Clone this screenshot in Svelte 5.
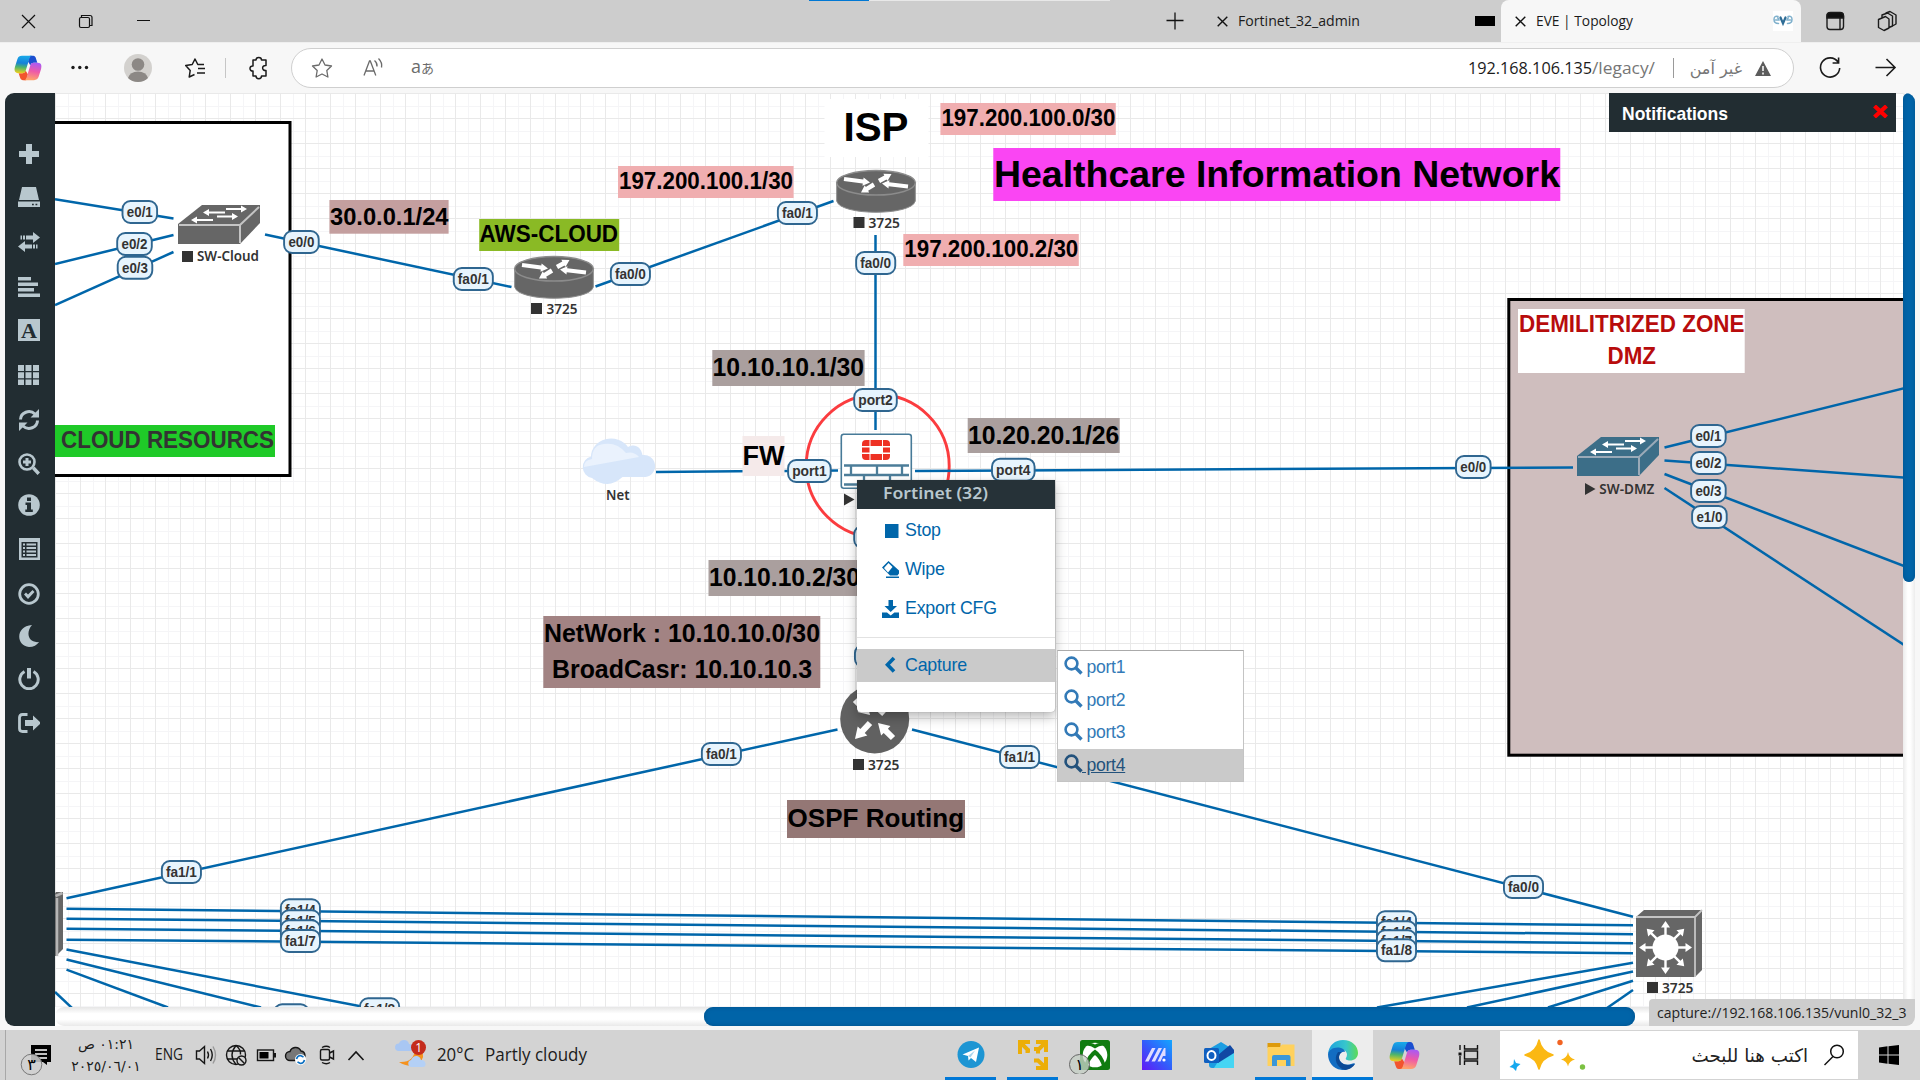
<script>
  const rail = [
    ['plus', 50], ['drive', 21], ['swap', 23], ['align', 23], ['font', 21], ['cells', 23], ['refresh', 22.5],
    ['zoom', 22], ['info', 19], ['list', 22], ['check', 23], ['moon', 20.5], ['power', 20.5], ['logout', 22.5]
  ];

  const links = [
    [55, 199.3, 173.5, 218.5], [55, 264, 173.5, 235], [55, 305, 173.5, 252], [265, 234.5, 511.5, 287],
    [595.5, 286.5, 833.5, 201], [875.5, 235, 875.5, 430], [656, 472, 838, 470.5], [915, 471, 1573, 467.5],
    [1664.5, 447.5, 1904, 388.3], [1664.5, 460.5, 1904, 477.5], [1664.5, 474, 1904, 566], [1664.5, 488, 1904, 645],
    [66.5, 898.3, 837.5, 729.5], [912, 729.5, 1633, 916.7],
    [66.5, 908.7, 1633, 925.3], [66.5, 918.7, 1633, 934.2], [66.5, 928.7, 1633, 943.2], [66.5, 939.7, 1633, 953.2],
    [66.5, 949.5, 380, 1010], [66.5, 959.5, 261, 1007.5], [66.5, 969.7, 168, 1007.5], [55, 992, 72, 1008],
    [1633, 962.7, 1377, 1007.5], [1633, 971.5, 1467, 1007.5], [1633, 980.7, 1548, 1007.5], [1633, 990, 1607, 1008]
  ];

  const ports = [
    ['e0/1', 139.8, 212], ['e0/2', 134.5, 244], ['e0/3', 135, 267.8], ['e0/0', 301.4, 242], ['fa0/1', 473.3, 279],
    ['fa0/0', 630.4, 274], ['fa0/1', 797.4, 213], ['fa0/0', 875.7, 263], ['port2', 875.5, 400], ['port1', 809.4, 471],
    ['port4', 1013.3, 469.7], ['port3', 875.5, 537], ['fa0/0', 874.5, 656], ['e0/0', 1473.3, 467], ['e0/1', 1708.4, 436],
    ['e0/2', 1708.4, 463], ['e0/3', 1708.4, 491], ['e1/0', 1709.4, 517], ['fa0/1', 721.4, 754], ['fa1/1', 1019.6, 757],
    ['fa1/1', 181.4, 872], ['fa0/0', 1523.5, 887], ['fa1/4', 300.4, 910.3], ['fa1/5', 300.4, 921.3], ['fa1/6', 300.4, 931.3],
    ['fa1/7', 300.4, 941], ['fa1/4', 1396.5, 922.3], ['fa1/6', 1396.5, 932.3], ['fa1/7', 1396.5, 941.3], ['fa1/8', 1396.5, 950.3],
    ['fa1/8', 379.6, 1009.3], ['e0/1', 291.4, 1015.3]
  ];
  const portWidth = (p) => (p[0] === 'p' ? 43 : p[0] === 'f' ? 39.5 : 35);
  const portText = (p) => (p[0] === 'p' ? 34.5 : p[0] === 'f' ? 31 : 26);

  // x, y, width, height, fill, font size, text colour, lines of [text, x, baseline, width]
  const labels = [
    [329.4, 200, 119.2, 33.7, '#c49f9f', 24.5, '#000', [['30.0.0.1/24', 330, 224.7, 118.5]]],
    [479.2, 219, 140, 32, '#8aba25', 24.2, '#000', [['AWS-CLOUD', 479.6, 241.5, 138.5]]],
    [618, 166, 175.6, 32, '#f0aeb0', 24, '#000', [['197.200.100.1/30', 619, 189, 174]]],
    [940.4, 103, 175.4, 32, '#f0aeb0', 24, '#000', [['197.200.100.0/30', 941.4, 126, 174]]],
    [903.3, 234, 175.5, 32, '#f0aeb0', 24, '#000', [['197.200.100.2/30', 904.3, 257, 174]]],
    [824.5, 99, 104, 58, '#fff', 41, '#000', [['ISP', 843.5, 141.3, 65]]],
    [993.3, 148, 567, 53, '#fa45f3', 37.5, '#000', [['Healthcare Information Network', 994, 187, 566]]],
    [712.3, 350, 152.3, 36, '#aa9f9e', 25.3, '#000', [['10.10.10.1/30', 712.6, 376, 151.5]]],
    [967.7, 418, 152, 35, '#aa9f9e', 25.3, '#000', [['10.20.20.1/26', 967.9, 443.7, 151.5]]],
    [742.5, 436, 42, 40, '#f5eaea', 28, '#000', [['FW', 742.6, 464.7, 42]]],
    [708.5, 560, 152, 36, '#aa9f9e', 25.3, '#000', [['10.10.10.2/30', 709, 586, 151]]],
    [543.3, 616, 277, 72, '#a28383', 25.8, '#000', [['NetWork : 10.10.10.0/30', 544, 642, 276], ['BroadCasr: 10.10.10.3', 552, 677.7, 260]]],
    [787, 800, 178, 38, '#947775', 26.5, '#000', [['OSPF Routing', 787.6, 827, 176.5]]],
    [40, 425, 235, 32, '#1fca28', 24, '#333', [['CLOUD RESOURCS', 61, 447.7, 213]]],
    [1518, 309, 226.7, 64, '#fff', 24, '#b80c0c', [['DEMILITRIZED ZONE', 1519, 332, 225.5], ['DMZ', 1607.5, 364, 48.5]]]
  ];

  // kind, marker x, marker y, name, text x, baseline, text width
  const names = [
    ['stop', 182, 251, 'SW-Cloud', 197, 261.3, 62], ['stop', 531, 303, '3725', 546.5, 314, 31],
    ['stop', 853.5, 217, '3725', 868.5, 228, 31.5], ['stop', 853, 759, '3725', 868, 770, 31.5],
    ['stop', 1647, 982, '3725', 1662, 993, 31.5], ['play', 1585, 483, 'SW-DMZ', 1599.3, 494, 55],
    ['play', 844, 493.5, 'Fortinet', 858, 506, 50], ['', 0, 0, 'Net', 606, 500, 23.5]
  ];

  const captures = ['port1', 'port2', 'port3', 'port4'];
</script>

{#snippet fit(text, width, size, color, height, baseline)}
  <svg class="fit" {width} {height}><text x="0" y={baseline} textLength={width} lengthAdjust="spacingAndGlyphs" font-size={size} fill={color}>{text}</text></svg>
{/snippet}

{#snippet copilot(size)}
  <svg width={size} height={size} viewBox="0 0 30 30">
    <defs>
      <linearGradient id="cpA" x1="0.3" y1="0" x2="0.2" y2="1"><stop offset="0" stop-color="#19a7e8" /><stop offset=".4" stop-color="#1681d8" /><stop offset=".65" stop-color="#4fb56a" /><stop offset="1" stop-color="#f3d01c" /></linearGradient>
      <linearGradient id="cpB" x1="0.7" y1="0" x2="0.5" y2="1"><stop offset="0" stop-color="#a85af5" /><stop offset=".5" stop-color="#ee5aa8" /><stop offset="1" stop-color="#ffa36b" /></linearGradient>
    </defs>
    <path d="M17 2h3.500c2 0 2.600 1.400 3.200 3.300l1.300 4.200h-3.800c-2 0-3 .8-3.600 2.800L15 8z" fill="#1b4fd0" />
    <path d="M13 28H9.500c-2 0-2.600-1.400-3.200-3.300L5 20.500h3.800c2 0 3-.8 3.600-2.800L15 22z" fill="#f2542d" />
    <path d="M8.500 2h11c-1.700 0-2.500 1.300-3.100 3.200l-3.800 12.500c-.7 2-1.600 2.800-3.500 2.800H4.500C.8 20.500 0 17.500 1 14L3.600 5.500C4.500 3 6 2 8.500 2z" fill="url(#cpA)" />
    <path d="M21.500 28h-11c1.700 0 2.500-1.300 3.100-3.200l3.800-12.500c.7-2 1.600-2.800 3.500-2.800h4.600c3.700 0 4.500 3 3.500 6.500l-2.600 8.500c-.9 2.500-2.400 3.500-4.900 3.500z" fill="url(#cpB)" />
  </svg>
{/snippet}

{#snippet arrow(x, y, dx, dy, w, head)}
  {@const len = Math.hypot(dx, dy)}
  <g transform="translate({x} {y}) rotate({(Math.atan2(dy, dx) * 180) / Math.PI})">
    <path d="M0 {-w / 2}H{len - head}V{-head * 0.6}L{len} 0L{len - head} {head * 0.6}V{w / 2}H0z" fill="#fff" />
  </g>
{/snippet}

{#snippet netSwitch(x, y, color, edge)}
  <g transform="translate({x} {y})">
    <path d="M0 19L24 0H82V18L62 39H0z" fill={color} />
    <path d="M1 20H62L81 2M62 20V38" fill="none" stroke={edge} stroke-width="2" />
    {@render arrow(48, 4, 21, 0, 2, 6)}
    {@render arrow(47, 7.5, -22, 0, 2, 6)}
    {@render arrow(39, 11.5, 21, 0, 2, 6)}
    {@render arrow(35, 15, -22, 0, 2, 6)}
  </g>
{/snippet}

{#snippet router(x, y)}
  <g transform="translate({x} {y})">
    <path d="M.7 13V31C4 46 76 46 79.3 31V13z" fill="#666" stroke="#8c8c8c" />
    <ellipse cx="40" cy="12.8" rx="39.4" ry="12.3" fill="#666" stroke="#8c8c8c" stroke-width="1.5" />
    {@render arrow(8, 9, 26, 3.5, 4, 7)}
    {@render arrow(72, 16.500, -26, -3, 4, 7)}
    {@render arrow(43, 11, 12.5, -7, 4.5, 7)}
    {@render arrow(38, 14.5, -13, 8, 4.5, 7)}
  </g>
{/snippet}

{#snippet lens()}
  <svg width="19" height="19" viewBox="0 0 19 19" fill="none" stroke="currentColor"><circle cx="7.5" cy="7.5" r="5.9" stroke-width="2.600" /><path d="M12 12l5.500 5.500" stroke-width="3.400" /></svg>
{/snippet}

<div class="screen">
  <header class="tabs">
    <div class="loader"><i></i></div>
    <svg class="win" width="160" height="42" viewBox="0 0 160 42" fill="none" stroke="#111" stroke-width="1.2">
      <path d="M22 15l13 13M35 15L22 28M137 20.5h13" /><rect x="79.500" y="17.5" width="10" height="10" rx="1.5" /><path d="M81.500 17.500V15.500h8.500q2 0 2 2v8h-2" /></svg>
    <svg class="plus" width="18" height="42" viewBox="0 0 18 42" stroke="#111" stroke-width="1.3"><path d="M9 12.500v17M.5 20.500h17" /></svg>
    <div class="tab">
      <svg width="11" height="11" viewBox="0 0 11 11" stroke="#111" stroke-width="1.4"><path d="M.7.7l9.600 9.600M10.300.7L.7 10.300" /></svg>
      {@render fit('Fortinet_32_admin', 122, 15.2, '#1b1b1b', 24, 17)}
      <b class="blackicon"></b>
    </div>
    <div class="tab active">
      <svg width="11" height="11" viewBox="0 0 11 11" stroke="#111" stroke-width="1.4"><path d="M.7.7l9.600 9.600M10.300.7L.7 10.300" /></svg>
      {@render fit('EVE | Topology', 97, 15.2, '#1b1b1b', 24, 17)}
      <svg class="eve" width="20" height="20" viewBox="0 0 20 20" fill="none" stroke-linecap="round"><rect width="20" height="20" fill="#fff" /><path d="M5 5.500Q1 4.500 1 8.500t4.500 4M2.500 9h3.500q0-2-1.500-2M15 5.500q4-1 4 3t-4.500 4M17.500 9H14q0-2 1.500-2" stroke="#7fb0cc" stroke-width="1.500" /><path d="M7.500 6.500L10 12.500l2.500-6" stroke="#2f6d96" stroke-width="2.200" /></svg>
    </div>
    <svg class="tabtools" width="119" height="42" viewBox="0 0 119 42" fill="none" stroke="#1b1b1b" stroke-width="1.400">
      <rect x="26" y="13" width="16.500" height="16.500" rx="3" /><path d="M26 18v-2q0-3.500 3.500-3.500h9.500q3.500 0 3.500 3.500v2z" fill="#111" /><path d="M39 18v11" />
      <path d="M77.500 19.500l7-3 3.500 2.500v9l-5 2.500-5.500-3zM81 17.500v-2.500l5.500-2 5 3v10l-3.500 1.500M85 13.500v-.500l4-1.500 6 3.500v9l-3.500 2" stroke-linejoin="round" />
    </svg>
  </header>

  <div class="toolbar">
    <div class="tools">
      {@render copilot(28)}
      <svg class="rest" width="249" height="50" viewBox="42 43 249 50" fill="none" stroke="#1b1b1b" stroke-width="1.500">
        <g fill="#1b1b1b" stroke="none"><circle cx="73" cy="67.500" r="1.700" /><circle cx="79.800" cy="67.500" r="1.700" /><circle cx="86.500" cy="67.500" r="1.700" /></g>
        <circle cx="138" cy="68" r="14" fill="#d3d1ce" stroke="none" /><circle cx="138" cy="64.500" r="6.300" fill="#8c8885" stroke="none" /><path d="M128 78q2-6.500 10-6.500t10 6.500q-4 4-10 4t-10-4z" fill="#8c8885" stroke="none" />
        <path d="M204 64.500h-6.200L195 59l-2.800 5.500-6.500 1 4.500 5-1 6.500 5.300-2.500M198 68.500h7M197 73h8" stroke-linejoin="round" />
        <path d="M225.500 58v20" stroke="#c6c6c6" stroke-width="1" />
        <path d="M253 60h3c0-3.500 5.500-3.500 5.500 0h4.500v5.500c-4.500-.5-4.500 5.500 0 5v5.500h-4.500c0 3.500-5.500 3.500-5.500 0h-3v-5c-4 .5-4-5.500 0-5z" stroke-linejoin="round" />
      </svg>
    </div>
    <div class="omnibox">
      <svg width="150" height="38" viewBox="292 49 150 38" fill="none" stroke="#6b6b6b" stroke-width="1.300">
        <path d="M322 59l3 6 6.500 1-4.700 4.500 1.100 6.500-5.900-3-5.900 3 1.100-6.500-4.700-4.500 6.500-1z" stroke-linejoin="round" />
        <path d="M364 75.500l5.500-14.500h.8l5.500 14.500M366 71h8M374.500 60.500q3 2.500 2.500 6M378.500 58.500q4 4 3 9" />
        <text x="411" y="73" font-size="18" fill="#6b6b6b" stroke="none" textLength="10" lengthAdjust="spacingAndGlyphs">a</text><text x="421" y="73" font-size="13" fill="#6b6b6b" stroke="none" font-family="Noto Sans CJK JP">あ</text>
      </svg>
      <div class="url">
        {@render fit('192.168.106.135', 124, 17.2, '#1b1b1b', 26, 18.5)}{@render fit('/legacy/', 63, 17.2, '#767676', 26, 18.5)}
        <i></i>
        <span class="unsafe" dir="rtl" lang="ar">غير آمن</span>
        <svg width="16" height="15" viewBox="0 0 16 15"><path d="M8 0l8 15H0z" fill="#5c5c5c" /><path d="M8 5v5M8 11.500v2" stroke="#fff" stroke-width="1.500" /></svg>
      </div>
    </div>
    <svg class="nav" width="126" height="50" viewBox="1794 43 126 50" fill="none" stroke="#1b1b1b" stroke-width="1.600"><path d="M1838 62a9.600 9.600 0 1 0 1.700 6M1838.600 57.500v5.500h-6M1875.500 67.500h19M1886.500 59l8.500 8.500-8.500 8.500" /></svg>
  </div>

  <main class="frame">
    <nav class="rail">
      {#each rail as [name, gap]}
        <svg style:margin-top="{gap}px" width="22" height="22" viewBox="0 0 22 22" fill="#b8c7ce" stroke="none">
          {#if name === 'plus'}<path d="M8 1h6v7h7v6h-7v7H8v-7H1V8h7z" />
          {:else if name === 'drive'}<path d="M4 1h14l3 13H1zM0 15.500h22V21H0z" /><path d="M14 18.500h1.800M17.500 18.500h1.800" stroke="#222d32" stroke-width="1.500" />
          {:else if name === 'swap'}<path d="M8 4.500h7V1l7 5.500-7 5.500V8.500H8zM5 4.500h2v4H5zM2.500 4.500h1.500v4H2.500zM14 13.500H7V10l-7 5.500L7 21v-3.500h7zM15 13.500h2v4h-2zM18 13.500h1.500v4H18z" />
          {:else if name === 'align'}<path d="M0 1h13v3.500H0zM0 6.500h20V10H0zM0 12h16v3.500H0zM0 17.500h22V21H0z" />
          {:else if name === 'font'}<path d="M0 0h22v22H0z" /><text x="3" y="18.500" font-size="21" textLength="16" lengthAdjust="spacingAndGlyphs" font-weight="700" fill="#222d32" font-family="Liberation Serif">A</text>
          {:else if name === 'cells'}<path d="M0 1h6v6H0zM7.500 1h6v6h-6zM15 1h6v6h-6zM0 8.200h6v6H0zM7.500 8.200h6v6h-6zM15 8.200h6v6h-6zM0 15.500h6v5.500H0zM7.500 15.500h6v5.500h-6zM15 15.500h6v5.500h-6z" />
          {:else if name === 'refresh'}<path d="M2.500 10.500A8.500 8 0 0 1 17 5M19.500 11.500A8.500 8 0 0 1 5 17" fill="none" stroke="#b8c7ce" stroke-width="3" /><path d="M21 0v8.500h-8.500zM1 22v-8.500h8.500z" />
          {:else if name === 'zoom'}<circle cx="9" cy="9" r="7.500" fill="none" stroke="#b8c7ce" stroke-width="2.600" /><path d="M7.500 5h3v2.500H13v3h-2.500V13h-3v-2.500H5v-3h2.500zM14 16l2.500-2.500 5.500 6-2.500 2.500z" />
          {:else if name === 'info'}<circle cx="11" cy="11" r="10.800" /><path d="M9 3.500h4v3.500H9zM7.500 8.500H13v7h1.800V18H7.300v-2.500H9v-4.500H7.500z" fill="#222d32" />
          {:else if name === 'list'}<path d="M1 0h21v22H1z" /><path d="M3.500 4h16v15.500h-16z" fill="#222d32" /><path d="M5 6.500h2M8.500 6.500h9.500M5 10h2M8.500 10h9.500M5 13.500h2M8.500 13.500h9.500M5 17h2M8.500 17h9.500" stroke="#b8c7ce" stroke-width="2" />
          {:else if name === 'check'}<circle cx="11" cy="11" r="9.300" fill="none" stroke="#b8c7ce" stroke-width="2.800" /><path d="M6 11.500l2-2 2 2 4.500-4.500L16.500 9 10 16z" />
          {:else if name === 'moon'}<path d="M14 0C-3 1-2 21 11 22c4.500 0 8-2 10-5C10 18.500 7.500 7 14 0z" />
          {:else if name === 'power'}<path d="M6.500 3.500a9.200 9.200 0 1 0 9 0" fill="none" stroke="#b8c7ce" stroke-width="3" /><path d="M9 0h4v10.500H9z" />
          {:else}<path d="M9.500 2.500H4.500q-3 0-3 3v11q0 3 3 3h5" fill="none" stroke="#b8c7ce" stroke-width="2.800" /><path d="M7 8h8V3.500l8 7.500-8 7.500V14H7z" />{/if}
        </svg>
      {/each}
    </nav>

    <div class="stage">
      <div class="viewport">
        <svg class="topology" width="1848" height="914" viewBox="55 93 1848 914">
          <rect x="30" y="122.500" width="260" height="353" fill="#fff" stroke="#000" stroke-width="3" />
          <rect x="1508.800" y="299.500" width="420" height="455.700" fill="#cfbebe" stroke="#000" stroke-width="3" />
          <circle cx="877.700" cy="466" r="71.500" fill="none" stroke="#fb3c3f" stroke-width="2.900" />
          {#each links as [x1, y1, x2, y2]}<line {x1} {y1} {x2} {y2} stroke="#0066aa" stroke-width="2.500" />{/each}

          {#each labels as [x, y, w, h, bg, size, color, lines]}
            <rect {x} {y} width={w} height={h} fill={bg} />
            {#each lines as [text, tx, ty, tw]}<text class="note" x={tx} y={ty} textLength={tw} lengthAdjust="spacingAndGlyphs" font-size={size} fill={color}>{text}</text>{/each}
          {/each}

          {@render netSwitch(178, 205, '#666', '#c4c4c4')}
          {@render netSwitch(1577, 437, '#3c6e88', '#9aaab8')}
          {@render router(514, 256)}
          {@render router(836, 170)}

          <circle cx="874.700" cy="719" r="34.500" fill="#616161" />
          {@render arrow(870, 723, -15, 16, 6, 11)}
          {@render arrow(893, 738, -15, -15, 6, 11)}
          {@render arrow(880, 714, 14, -15, 6, 11)}
          {@render arrow(855, 700, 15, 15, 6, 11)}

          <g>
            <path d="M1636 917l8-7h58v60l-7 7h-59z" fill="#666" /><path d="M1636 917h59l7-7M1695 917v60" fill="none" stroke="#c4c4c4" stroke-width="1.800" />
            <circle cx="1665.500" cy="947.500" r="13" fill="#fff" />
            {#each [0, 45, 90, 135, 180, 225, 270, 315] as a}
              <g transform="translate(1665.500 947.500) rotate({a})"><path d="M10-1.200h10V-4.500L26.500 0 20 4.500V1.200H10z" fill="#fff" /></g>
            {/each}
          </g>
          <path d="M50 899l6-7h7v57l-7 7h-6z" fill="#666" /><path d="M55.500 896l7-3M57 898v58" fill="none" stroke="#b5b5b5" stroke-width="2.500" />

          <path d="M592 478a11 11 0 0 1-1-21.500 20 18 0 0 1 37-9.500c7-4 13 0 14.500 8a11 11 0 0 1 3 22h-23q-8 7-15 7-8 0-15.500-6z" fill="#d7e6fa" />
          <path d="M584 467q0-7 8-8 0-14 12-15 13-2 22 9 8-2 13 4z" fill="#eaf2fd" />

          <rect x="841.300" y="434.300" width="70" height="54" rx="2.500" fill="#fff" stroke="#477a98" stroke-width="1.600" />
          <path d="M844 465.500h65M844 475h65M844 484.500h65M851 466v9M877 466v9M902 466v9M864 475v9M890 475v9" stroke="#4c7d99" stroke-width="2.300" />
          <path d="M870.500 440h11.500v6h-11.500zM870.500 454h11.500v6h-11.500zM862 447.500h7.500v5h-7.500zM883 447.500h7v5h-7zM862 446v-2q0-4 4-4h3.500v6zM890 446v-2q0-4-4-4h-3v6zM862 454v2q0 4 4 4h3.500v-6zM890 454v2q0 4-4 4h-3v-6z" fill="#ee3124" />

          {#each ports as [text, x, y]}
            <rect x={x - portWidth(text) / 2 + 0.2} y={y - 11} width={portWidth(text) - 0.4} height="22" rx="8" fill="#e7f4fd" stroke="#2f6690" stroke-width="1.900" />
            <text class="port" {x} y={y + 5} text-anchor="middle" textLength={portText(text)} lengthAdjust="spacingAndGlyphs">{text}</text>
          {/each}

          {#each names as [kind, mx, my, text, x, y, w]}
            {#if kind === 'stop'}<rect x={mx} y={my} width="11" height="11" fill="#333" />
            {:else if kind === 'play'}<path d="M{mx} {my}l10.500 6-10.500 6z" fill="#333" />{/if}
            <text class="name" {x} {y} textLength={w} lengthAdjust="spacingAndGlyphs">{text}</text>
          {/each}
        </svg>

        <div class="menu">
          <div class="menuhead">{@render fit('Fortinet (32)', 105, 16.3, '#b8c7ce', 29, 18.7)}</div>
          <a href="#stop"><svg width="18" height="18" viewBox="0 0 18 18" fill="currentColor"><path d="M3 2h13.500v14H3z" /></svg><span>Stop</span></a>
          <a href="#wipe"><svg width="18" height="18" viewBox="0 0 18 18" fill="currentColor"><path d="M6.500 0l10.500 9.500v3l-1.500 2H8L0 6.500zM6.500 2L2 7l4 4.500L10.500 6z" fill-rule="evenodd" /><path d="M4 15.500h13V17H4z" /></svg><span>Wipe</span></a>
          <a href="#export"><svg width="18" height="18" viewBox="0 0 18 18" fill="currentColor"><path d="M6.500 0h4.500v6h4L8.700 12 2.500 6h4zM0 12.500h5l3.700 3 3.700-3H17V18H0z" /></svg><span>Export CFG</span></a>
          <hr class="first" />
          <a class="on" href="#capture"><svg width="18" height="18" viewBox="0 0 18 18" fill="none" stroke="currentColor" stroke-width="3.600"><path d="M12 2L5.500 8.800 12 15.500" /></svg><span>Capture</span></a>
          <hr class="second" />
        </div>
        <div class="submenu">
          {#each captures as name, i}<a class:on={i === 3} href="#{name}">{@render lens()}<span>&nbsp;{name}</span></a>{/each}
        </div>

        <div class="notice">{@render fit('Notifications', 106, 17.8, '#fff', 20, 16)}<svg width="15" height="13" viewBox="0 0 15 13" stroke="#f00" stroke-width="4.200"><path d="M1.500 1l12 11M13.500 1l-12 11" /></svg></div>
      </div>
      <div class="vbar"><i></i></div>
      <div class="hbar"><i></i></div>
    </div>
    <div class="status">{@render fit('capture://192.168.106.135/vunl0_32_3', 249.5, 15.3, '#222', 27, 18.5)}</div>
  </main>

  <footer class="taskbar">
    <svg class="note-ico" width="62" height="50" viewBox="0 1030 62 50"><path d="M5.500 1030v50" stroke="#a8a8a8" /><path d="M31 1045h20v17h-4v3l-4-3H31z" fill="#000" /><path d="M35 1050h12M35 1054h12M39 1058h8" stroke="#fff" stroke-width="1.300" /><circle cx="31.500" cy="1064.500" r="10.300" fill="#d0d0d0" fill-opacity=".85" stroke="#777" /><text x="31.500" y="1070" font-size="16" text-anchor="middle" font-family="DejaVu Sans">٣</text></svg>
    <div class="clock" lang="ar"><span dir="rtl">٠١:٢١ ص</span><span>٢٠٢٥/٠٦/٠١</span></div>
    <div class="eng">{@render fit('ENG', 28, 15.5, '#1b1b1b', 24, 17)}</div>
    <svg class="tray" width="240" height="50" viewBox="191 1030 240 50" fill="none" stroke="#151515" stroke-width="1.400">
      <path d="M196.500 1051h3l5-4.500v17l-5-4.500h-3zM207.500 1051.500q2 3.500 0 7M210.500 1049q3.500 6 0 12" /><path d="M213 1046.500q5 8.500 0 17" stroke="#999" />
      <circle cx="236" cy="1055" r="9.500" /><path d="M227.500 1051h17M227 1059h10M236 1045.500q-8 9.500 0 19M236 1045.500q5 4 4.500 9" /><circle cx="241.500" cy="1060.500" r="4.500" fill="#d3d3d3" /><path d="M238.500 1057.500l6 6" />
      <rect x="257.500" y="1050" width="16" height="10.500" /><path d="M275 1053v4.500" stroke-width="2" /><rect x="259.500" y="1052" width="9" height="6.500" fill="#000" stroke="none" />
      <path d="M290 1060.500a4.500 4.500 0 0 1 0-9q1-3.500 5-4 4-.5 6 3.500 4 .5 4 5-.5 4-4 4.500z" fill="#777" /><circle cx="300.500" cy="1059.500" r="5.500" fill="#fff" stroke="none" /><path d="M296.500 1059q1-3.500 4-3.500l3 1.500M304.500 1060q-1 3.500-4 3.500l-3-1.500" stroke="#0a6fc2" stroke-width="1.600" />
      <rect x="320.500" y="1049.500" width="9" height="10.500" rx="1.500" /><path d="M329.500 1053l4-2v8l-4-2M322 1047.500q4.500-2.500 8 0M322 1062.500q4.500 2.500 8 0" />
      <path d="M348.500 1060l7.500-8 7.500 8" stroke-width="1.600" />
      <g stroke="none"><path d="M421 1049q5 8-2 14-9 6-20-1 15 1 16-13z" fill="#f5921e" /><path d="M398 1051a3.800 3.800 0 0 1 1-7.500q1-3.500 5-3.500 4 0 5 4 4 0 4 3.500t-3 3.500z" fill="#a9c7f3" /><path d="M411 1067a3.600 3.600 0 0 1 0-7q2-4.500 6-4 3 .5 4 4 4 0 4.500 3.500t-3 3.500z" fill="#b4d0f6" /><circle cx="418.500" cy="1047.500" r="7.500" fill="#c42b1c" /><text x="415.300" y="1052" font-size="12" fill="#fff">1</text></g>
    </svg>
    <div class="weather">{@render fit('20°C', 37, 17.8, '#1b1b1b', 28, 19.5)}{@render fit('Partly cloudy', 102, 17.8, '#1b1b1b', 28, 19.5)}</div>

    <div class="apps">
      <span class="app open"><svg width="30" height="30" viewBox="0 0 30 30"><circle cx="15" cy="14.500" r="13.500" fill="#1d95d3" /><path d="M6.500 14.500L23 7.500l-3 14.500-5-4-2.500 2.500-.5-4.500z" fill="#fff" /><path d="M12 16l7-5.500-4.500 7z" fill="#a9d4ec" /></svg></span>
      <span class="app open"><svg width="30" height="30" viewBox="0 0 30 30" fill="none" stroke="#ecae08" stroke-width="4"><path d="M2 14V2h10M3 3l6.500 6.500V13M18 2h10v10M27 3l-6 6h-5M28 17v11H18M27 27l-7-6.500h-4M12 10.500H8M20 10.500v3" /></svg></span>
      <span class="app"><svg class="wide" width="42" height="38" viewBox="-11 -4 42 38"><rect width="30" height="30" rx="2.500" fill="#107c10" /><circle cx="15" cy="15" r="12.300" fill="#fff" /><path d="M4.500 24.500Q8 14 15 9.500q7 4.500 10.500 15l-3 2.500Q20 19 15 15q-5 4-7.500 12zM5.500 5.500q5-.5 9.500 3 4.500-3.500 9.500-3l-2-2Q18 2 15 4.500 12 2 7.500 3.500z" fill="#107c10" /><circle cx="-.5" cy="24.500" r="10" fill="#c6d0c6" fill-opacity=".8" stroke="#666" /><text x="-.5" y="30" text-anchor="middle" font-size="16" font-family="DejaVu Sans">١</text></svg></span>
      <span class="app"><svg width="30" height="30" viewBox="0 0 30 30"><defs><linearGradient id="ma" x1="0" y1="1" x2="1" y2="0"><stop offset="0" stop-color="#6418f5" /><stop offset=".5" stop-color="#335cfb" /><stop offset="1" stop-color="#12a7ff" /></linearGradient></defs><rect width="30" height="30" fill="url(#ma)" /><path d="M3 21.500L10 8h3.500L6.500 21.500zM9.500 21.500L16.500 8H20l-7 13.500zM15.500 21.500L22 8h1.500v8H21l-2.500 5.500z" fill="#e0dcff" /><circle cx="22" cy="20" r="1.600" fill="#fff" /></svg></span>
      <span class="app"><svg width="30" height="30" viewBox="0 0 30 30"><path d="M5 9l12-7 13 8v17q0 1-2 1H8q-3 0-3-3z" fill="#1b9de2" /><path d="M15 20l15-9v17H10z" fill="#45d5f3" /><path d="M14 15l12-10 4 5v3l-16 10z" fill="#1048a4" /><rect y="8" width="15" height="15" rx="1.500" fill="#0f5fc0" /><ellipse cx="7.500" cy="15.500" rx="4" ry="4.500" fill="none" stroke="#fff" stroke-width="2" /></svg></span>
      <span class="app open"><svg width="30" height="30" viewBox="0 0 30 30"><path d="M1.500 3h13v5h-13z" fill="#dd9a0b" /><path d="M1.500 7H14l2-2.500h12.500V26h-27z" fill="#ffd15c" /><path d="M6 26V17q0-2 2-2h14.500q2 0 2 2v9H20v-6h-9v6z" fill="#3b97d9" /></svg></span>
      <span class="app open edge"><svg width="30" height="30" viewBox="0 0 30 30"><defs><linearGradient id="edgeTop" x1="0" x2="1"><stop offset="0" stop-color="#1ea2de" /><stop offset=".6" stop-color="#37c6cc" /><stop offset="1" stop-color="#5edb55" /></linearGradient></defs><path d="M0 14C1 5 7 0 15 0c9 0 15 6 15 13 0 5-4 7.500-8 7.500-3 0-5-1-4-2.500 3-5-1-9-6-9-6 0-10 2-12 5z" fill="url(#edgeTop)" /><path d="M0 14c1-4 5-7 11-6.500 4 .5 6 2.500 6 4.500-4-1-6 3-6 6 0 5 6 8 12 6 3-1 5-1 3 1-4 4-9 5.500-13 4.800C5 29 0 22 0 14z" fill="#136dc2" /><path d="M10 12c-5 7-1 16 7 18 5-.5 8-3 10-6-9 3-16-1-16-7 0-2 1-4 3-5z" fill="#0c4a96" /></svg></span>
      <span class="app">{@render copilot(31)}</span>
      <span class="app task"><svg width="22" height="22" viewBox="0 0 22 22" fill="none" stroke="#111" stroke-width="1.400"><path d="M3 1v5M3 12v9M7.500 1v4h13V1M7.500 21v-4h13v4" /><rect x="7.500" y="7" width="13" height="8" /><path d="M1.500 8.500h3v3h-3z" fill="#111" stroke="none" /></svg></span>
    </div>

    <div class="search">
      <svg width="90" height="48" viewBox="1505 1031 90 48"><path d="M1540 1040q2.500 12 14 15-11.500 3-14 14-2.500-11-14-14 11.500-3 14-15z" fill="#fbb813" stroke="#fbb813" stroke-linejoin="round" stroke-width="1.500" /><path d="M1569 1052q1 6 7 7.500-6 1.500-7 7-1-5.500-7-7 6-1.500 7-7.500z" fill="#fbb813" /><path d="M1515 1059l2 4 4.500 1-3.500 3-1 4-3-3-3.500-1 4-3z" fill="#15a8ee" /><circle cx="1561" cy="1042.500" r="2.700" fill="#f26322" /><circle cx="1583.500" cy="1067" r="2.700" fill="#7cc142" /></svg>
      <span dir="rtl" lang="ar">اكتب هنا للبحث</span>
      <svg width="22" height="22" viewBox="0 0 22 22" fill="none" stroke="#111" stroke-width="1.500"><circle cx="14" cy="7.500" r="6.300" /><path d="M10 12.500L1.500 21" /></svg>
    </div>
    <svg class="windows" width="20" height="20" viewBox="0 0 20 20"><path d="M0 2.500l8.500-1.200V9.500H0zM9.500 1.200L20 0v9.500H9.500zM0 10.500h8.500v8.200L0 17.500zM9.500 10.500H20V20L9.500 18.800z" /></svg>
  </footer>
</div>

<style>
  :global(body) { overflow: hidden; }
  .screen { width: 1920px; height: 1080px; display: flex; flex-direction: column; background: #f7f7f7; font-family: "Open Sans", "Noto Sans", "DejaVu Sans", sans-serif; overflow: hidden; }
  svg { display: block; flex: none; }
  .fit { overflow: visible; }
  a { text-decoration: none; }

  .tabs { position: relative; height: 42px; display: flex; align-items: center; background: #cdcdcd; flex: none; }
  .loader { position: absolute; top: 0; left: 809px; width: 301px; height: 1px; background: #e8e8e8; }
  .loader i { display: block; width: 60px; height: 1px; background: #0078d4; }
  .plus { margin-left: 1005.5px; margin-right: 33px; }
  .tab { display: flex; align-items: center; width: 284.5px; height: 42px; gap: 10px; box-sizing: border-box; }
  .blackicon { width: 20px; height: 10px; background: #000; margin-left: 105px; }
  .tab.active { width: 300px; background: #f7f7f7; border-radius: 8px 8px 0 0; padding: 0 8px 0 14px; }
  .tab.active .eve { margin-left: auto; }

  .toolbar { display: flex; height: 51px; flex: none; background: #f7f7f7; align-items: flex-start; box-sizing: border-box; border-top: 1px solid #efefef; }
  .tools { display: flex; align-items: center; width: 291px; height: 50px; padding-left: 14px; box-sizing: border-box; }
  .omnibox { display: flex; align-items: center; justify-content: space-between; width: 1503px; height: 40px; margin-top: 5px; box-sizing: border-box; border: 1px solid #cfcfcf; border-radius: 20px; background: #fff; }
  .url { display: flex; align-items: center; padding-right: 22px; }
  .url i { width: 1px; height: 20px; background: #9a9a9a; margin: 0 14px 0 18px; }
  .unsafe { width: 54px; margin-right: 13px; font: 16px "DejaVu Sans", sans-serif; color: #767676; white-space: nowrap; }

  .frame { position: relative; display: flex; height: 932.5px; margin: 0 5px 4.5px; flex: none; border-radius: 9px; overflow: hidden; background: #fff; }
  .rail { width: 50px; background: #222d32; display: flex; flex-direction: column; align-items: center; padding-right: 2px; box-sizing: border-box; flex: none; }
  .stage { display: grid; grid-template: 914px 18.5px / 1848px 12px; }
  .viewport { position: relative; overflow: hidden; background-color: #fff;
    background-image: linear-gradient(90deg, #e9e9e9 1px, transparent 1px), linear-gradient(#e9e9e9 1px, transparent 1px), linear-gradient(90deg, #f5f5f7 1px, transparent 1px), linear-gradient(#f5f5f7 1px, transparent 1px);
    background-size: 25px 25px; background-position: 0 0, 0 0, 13px 0, 0 13px; }
  .note { font-family: "Liberation Sans", Arial, sans-serif; font-weight: 700; }
  .port { font: 700 14.4px "Liberation Sans", Arial, sans-serif; fill: #333; }
  .name { font: 600 14px "Noto Sans", "Open Sans", sans-serif; fill: #333; }

  .vbar { background: linear-gradient(90deg, #ececec, #fff 40%, #fff 60%, #ececec); }
  .vbar i { display: block; height: 489px; background: #0064a8; border-radius: 6px; box-shadow: inset 0 0 4px #00508a; }
  .hbar { grid-column: 1 / 3; background: linear-gradient(#e6e6e6, #fff 35%, #fff 65%, #e9e9e9); border-radius: 9px; }
  .hbar i { display: block; width: 931px; height: 18.5px; margin-left: 649px; background: #0064a8; border-radius: 9px; box-shadow: inset 0 0 4px #00508a; }

  .menu { position: absolute; left: 802px; top: 387px; width: 198px; height: 232px; background: #fff; border-radius: 0 0 4px 4px; box-shadow: 0 5px 12px rgba(0, 0, 0, .28), 0 0 1px rgba(0, 0, 0, .4); font: 17.8px "Liberation Sans", Arial, sans-serif; letter-spacing: -.2px; }
  .menuhead { height: 29px; background: #263238; padding-left: 26px; margin-bottom: 2px; font-family: "Noto Sans", "Open Sans", sans-serif; font-weight: 600; letter-spacing: 0; }
  .menu a { display: flex; align-items: center; gap: 4px; height: 39px; padding-left: 25px; color: #0066aa; }
  .menu a span { padding-left: 1px; }
  .menu hr { border: 0; height: 1px; background: #e2e2e2; margin: 0; }
  .menu hr.first { margin: 9px 0 11px; }
  .menu hr.second { margin-top: 11px; }
  .menu a.on { height: 33px; background: #cacaca; }
  .menu a.on svg, .menu a.on span { margin-top: -1px; }

  .submenu { position: absolute; left: 1001.5px; top: 557px; width: 187px; height: 132px; box-sizing: border-box; background: #fff; border: 1px solid #c4c4c4; border-top-color: #aaa; font: 17.6px "Liberation Sans", Arial, sans-serif; letter-spacing: -.3px; }
  .submenu a { display: flex; align-items: center; height: 32.7px; padding-left: 6px; color: #337ab7; }
  .submenu a svg { margin-top: -3px; }
  .submenu a span { margin-left: -.5px; }
  .submenu a.on { background: #cacaca; color: #23527c; height: 32px; }
  .submenu a.on span { text-decoration: underline; }

  .notice { position: absolute; left: 1554px; top: 0; width: 287px; height: 39px; box-sizing: border-box; display: flex; justify-content: space-between; align-items: center; padding: 3px 8px 0 13px; background: #222d32; font-weight: 700; font-family: "Liberation Sans", Arial, sans-serif; }
  .notice svg:last-child { margin-top: -6px; }

  .status { position: absolute; right: 0; bottom: 0; width: 266px; height: 27px; box-sizing: border-box; padding-left: 8px; background: #cdcdcd; border-radius: 4px 0 0 0; }

  .taskbar { display: flex; align-items: center; height: 50px; flex: none; background: #d3d3d3; }
  .clock { display: flex; flex-direction: column; align-items: center; width: 62px; margin: 0 18px 0 13px; font: 14px/22px "DejaVu Sans", sans-serif; letter-spacing: -1.1px; white-space: nowrap; color: #1b1b1b; }
  .eng { width: 36px; }
  .tray { margin-right: 6px; }
  .weather { display: flex; gap: 11px; width: 503px; }
  .apps { display: flex; }
  .app { width: 62px; height: 50px; display: flex; align-items: center; justify-content: center; position: relative; }
  .app .wide { margin-left: -10px; }
  .app.open::after { content: ""; position: absolute; bottom: 0; left: 5px; width: 51px; height: 3px; background: #0078d7; }
  .app.edge { background: #ededed; width: 61px; }
  .app.edge::after { left: 0; width: 61px; }
  .app.task { width: 65px; }
  .search { display: flex; align-items: center; width: 358px; height: 48px; box-sizing: border-box; padding: 0 13px 0 4px; background: #fff; }
  .search span { margin-left: auto; margin-right: 15px; font: 18.3px "DejaVu Sans", sans-serif; color: #222; white-space: nowrap; }
  .windows { margin-left: 21px; }
</style>
